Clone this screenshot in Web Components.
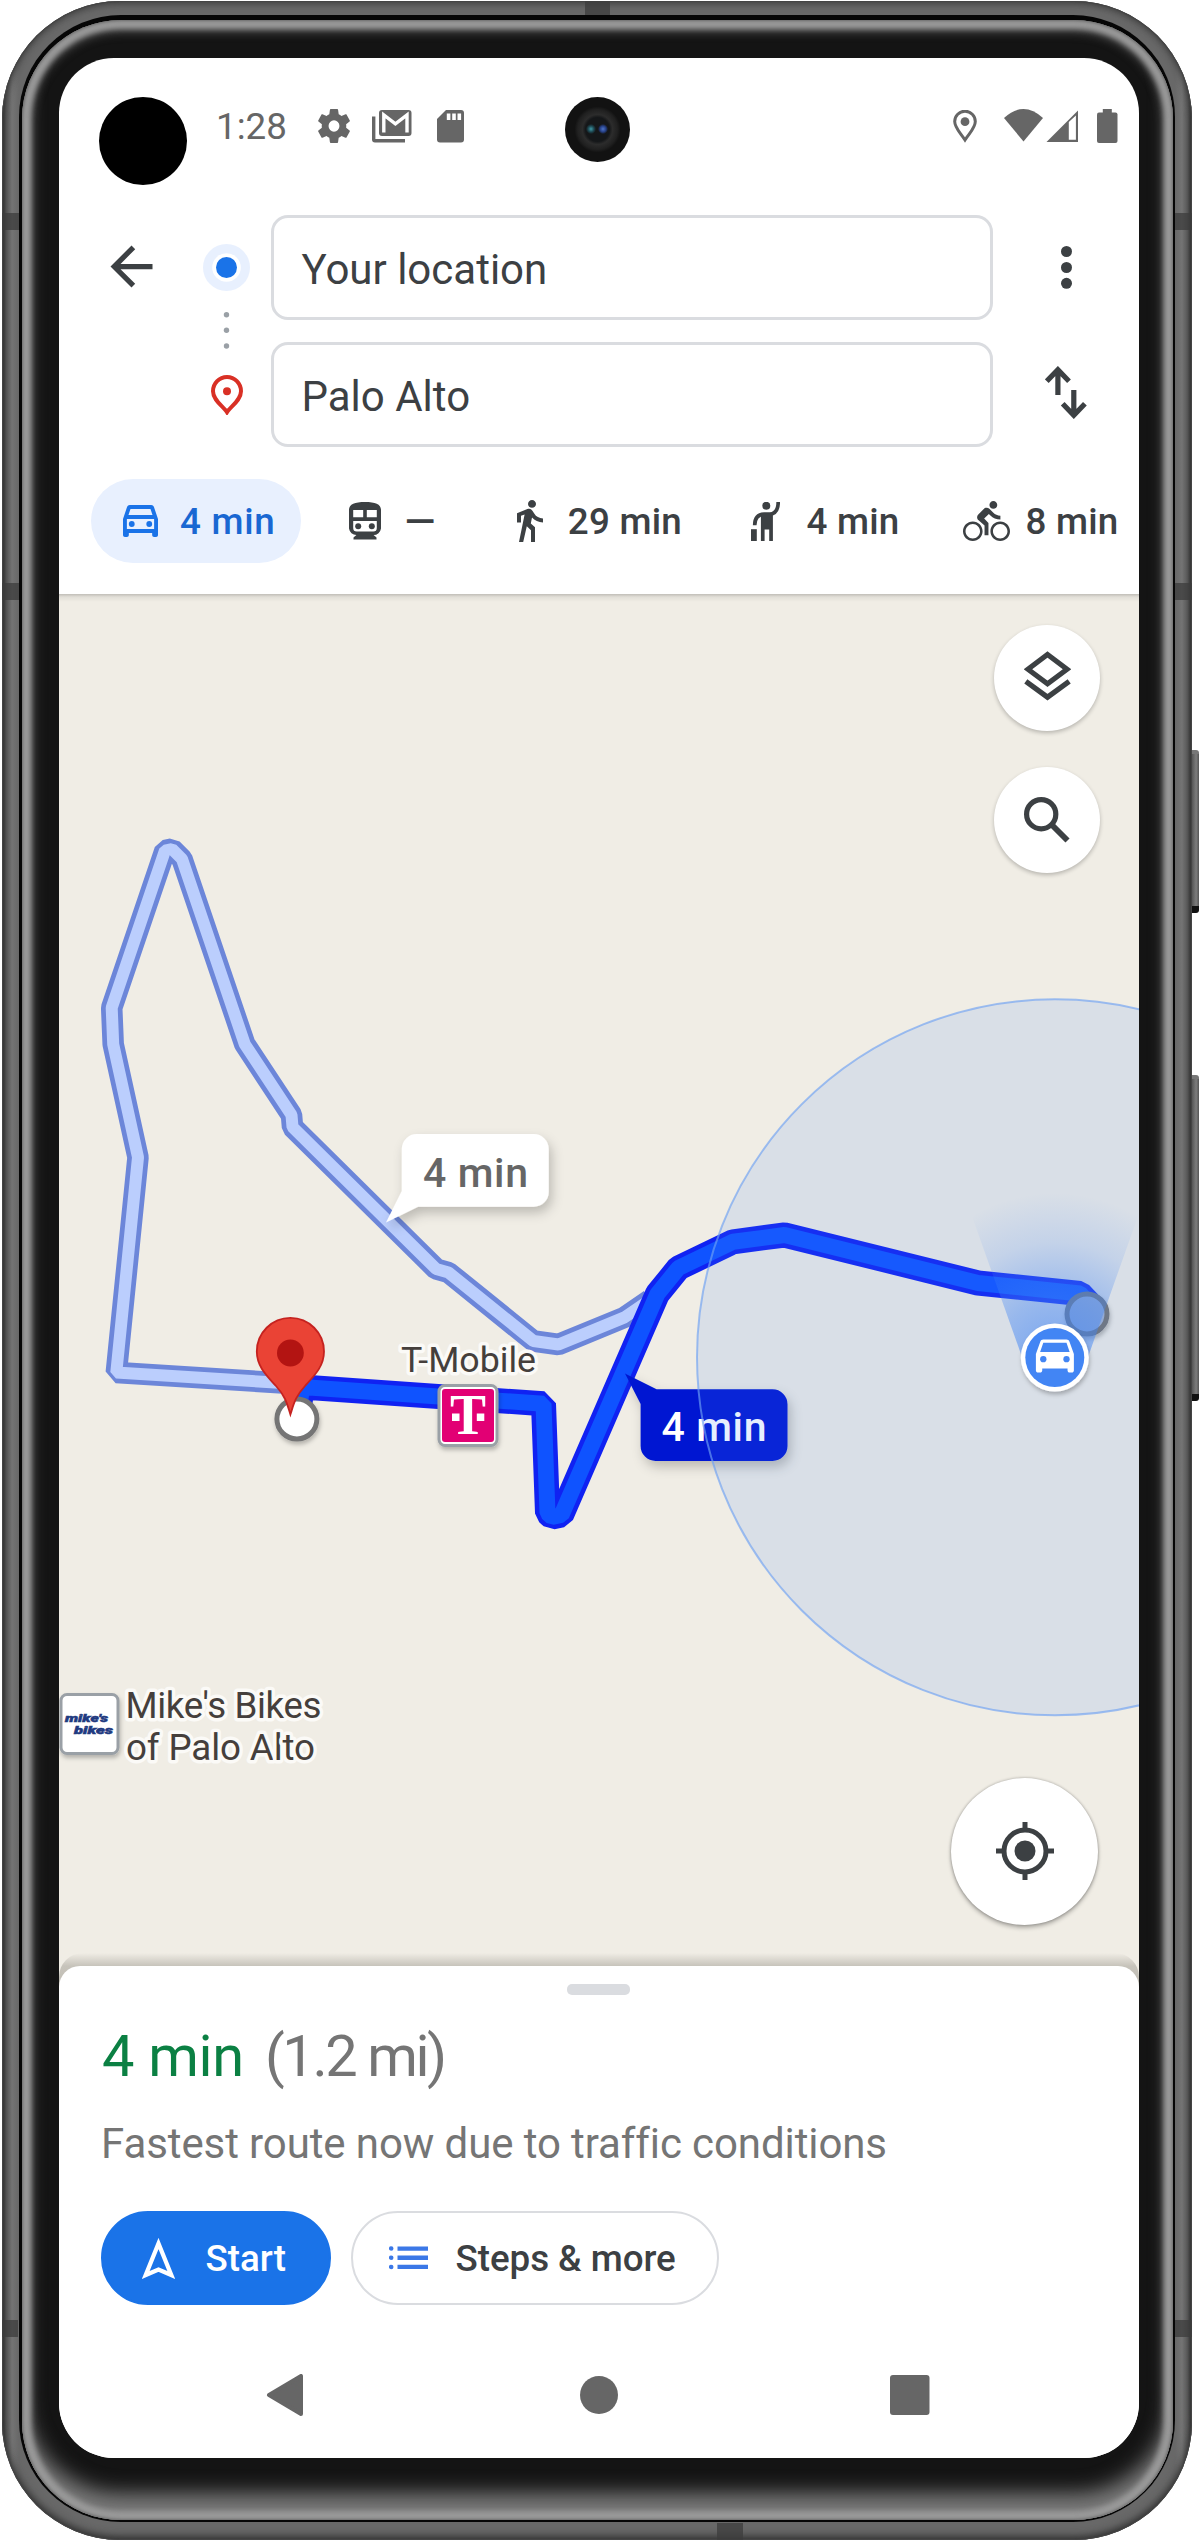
<!DOCTYPE html>
<html lang="en">
<head>
<meta charset="utf-8">
<title>Directions</title>
<style>
html,body{margin:0;padding:0;background:#fff}
body{width:1200px;height:2541px;overflow:hidden;font-family:Roboto,sans-serif;color:#3c4043}
</style>
</head>
<body>
<directions-app></directions-app>
<script>
const CAR='M18.92 6.01C18.72 5.42 18.16 5 17.5 5h-11c-.66 0-1.21.42-1.42 1.01L3 12v8c0 .55.45 1 1 1h1c.55 0 1-.45 1-1v-1h12v1c0 .55.45 1 1 1h1c.55 0 1-.45 1-1v-8l-2.08-5.99z';
// name: [width, height, viewBox, markup]
const ICONS={
gear:[32,34,'2.6 2.4 18.8 19.2','<path d="M19.14 12.94c.04-.3.06-.61.06-.94 0-.32-.02-.64-.07-.94l2.03-1.58c.18-.14.23-.41.12-.61l-1.92-3.32c-.12-.22-.37-.29-.59-.22l-2.39.96c-.5-.38-1.03-.7-1.62-.94l-.36-2.54c-.04-.24-.24-.41-.48-.41h-3.84c-.24 0-.43.17-.47.41l-.36 2.54c-.59.24-1.13.57-1.62.94l-2.39-.96c-.22-.08-.47 0-.59.22L2.74 8.87c-.12.21-.08.47.12.61l2.03 1.58c-.05.3-.09.63-.09.94s.02.64.07.94l-2.03 1.58c-.18.14-.23.41-.12.61l1.92 3.32c.12.22.37.29.59.22l2.39-.96c.5.38 1.03.7 1.62.94l.36 2.54c.05.24.24.41.48.41h3.84c.24 0 .44-.17.47-.41l.36-2.54c.59-.24 1.13-.56 1.62-.94l2.39.96c.22.08.47 0 .59-.22l1.92-3.32c.12-.22.07-.47-.12-.61l-2.01-1.58zM12 15.2a3.2 3.2 0 1 1 0-6.4 3.2 3.2 0 0 1 0 6.4z"/>'],
mail:[39.5,33,'0 0 39.5 33','<path d="M0 6.5h3.4V29H33v3.4H3a3 3 0 0 1-3-3z"/><rect x="7" y="0" width="32.5" height="26" rx="3"/><path d="M11.8 22.5V5l11.6 8.8L35 5v17.500" fill="none" stroke="#fff" stroke-width="3.400"/>'],
sd:[27,33,'0 0 27 33','<path d="M9 0H24a3 3 0 0 1 3 3V29.500a3 3 0 0 1-3 3H3a3 3 0 0 1-3-3V9z"/><path d="M11.600 3.500v6.500M17 3.500v6.500M22.300 3.500v6.500" stroke="#fff" stroke-width="3.600"/>'],
pinSmall:[24,33,'0 0 24 33','<path d="M12 30C8 23.500 1.700 18 1.700 11.500a10.300 10.300 0 0 1 20.600 0C22.300 18 16 23.500 12 30z" fill="none" stroke="currentColor" stroke-width="3"/><circle cx="12" cy="11.700" r="4.400"/>'],
wifi:[39,32.500,'0 0 39 32.500','<path d="M0 9Q19.500-9 39 9L19.500 32.500z"/>'],
signal:[32.500,32.500,'0 0 32.500 32.500','<path d="M0 32.500L32.500 0V32.500zM22.800 12V29.800H29.900V5.500z" fill-rule="evenodd"/>'],
battery:[20.500,34,'0 0 20.500 34','<rect y="3.500" width="20.500" height="30.500" rx="2"/><rect x="5.800" width="9" height="6"/>'],
back:[63,63,'0 0 24 24','<path d="M20 11H7.830l5.590-5.590L12 4l-8 8 8 8 1.410-1.410L7.830 13H20v-2z"/>'],
origin:[47,47,'0 0 47 47','<circle cx="23.500" cy="23.500" r="23.500" fill="#e8f0fe"/><circle cx="23.500" cy="23.500" r="14.300" fill="#fff"/><circle cx="23.500" cy="23.500" r="10.500" fill="#1a73e8"/>'],
steps:[47,37,'0 0 47 37','<g fill="#9aa0a6"><circle cx="23.500" cy="2.800" r="2.700"/><circle cx="23.500" cy="18.300" r="2.700"/><circle cx="23.500" cy="34" r="2.700"/></g>'],
dest:[32,40,'0 0 32 40','<path d="M16 37.200C12.500 31.500 2 25.500 2 16.200a14 14.200 0 0 1 28 0C30 25.500 19.500 31.500 16 37.200z" fill="none" stroke="#d93025" stroke-width="4"/><circle cx="16" cy="16.200" r="4" fill="#d93025"/>'],
more:[11,43,'0 0 11 43','<circle cx="5.500" cy="5.500" r="5.500"/><circle cx="5.500" cy="21.500" r="5.500"/><circle cx="5.500" cy="37.300" r="5.500"/>'],
swap:[42,53,'0 0 42 53','<g fill="none" stroke="currentColor" stroke-width="5.200"><path d="M12.900 29V4M1.800 15.200L12.900 3.700 24 15.200"/><path d="M28.800 24V49M17.700 37.800L28.800 49.300 39.900 37.800"/></g>'],
car:[35,32,'3 5 18 16','<path fill-rule="evenodd" d="'+CAR+'M6.850 7h10.290l1.040 3H5.810l1.040-3zM19 17H5v-5h14v5z"/><circle cx="7.500" cy="14.500" r="1.500"/><circle cx="16.500" cy="14.500" r="1.500"/>'],
train:[32,37.500,'0 0 32 37.500','<path fill-rule="evenodd" d="M0 8C0 2 6 0 16 0s16 2 16 8V26.500A7.500 7.500 0 0 1 24.500 33H7.500A7.500 7.500 0 0 1 0 26.500zM4.200 8v7.200h10V8zM17.800 8v7.200h10V8zM4.200 19v7a3.500 3.500 0 0 0 3.500 3.500H24.300a3.500 3.500 0 0 0 3.500-3.500V19z"/><circle cx="9.200" cy="24.300" r="3"/><circle cx="22.800" cy="24.300" r="3"/><path d="M8 32.500H24l3.500 3V37.500H4.500V35.500z"/>'],
walk:[26,42,'6 1.500 13 21.500','<path d="M13.500 5.500c1.100 0 2-.9 2-2s-.9-2-2-2-2 .9-2 2 .9 2 2 2zM9.800 8.900L7 23h2.100l1.800-8 2.100 2v6h2v-7.500l-2.100-2 .6-3C14.800 12 16.800 13 19 13v-2c-1.900 0-3.500-1-4.300-2.400l-1-1.600c-.4-.6-1-1-1.700-1-.3 0-.5.100-.8.100L6 8.300V13h2V9.600l1.800-.7"/>'],
hail:[30,39,'0 0 30 39','<circle cx="16.300" cy="3.800" r="4"/><path d="M28.200 0C28.200 7 26 11.500 20 12.200H14C8 12.500 4.800 16 4.700 23.200" fill="none" stroke="currentColor" stroke-width="3.700"/><path d="M10.900 11H22.900V39H19.200V27.500H14.600V39H10.900z"/><rect x="1" y="27.200" width="5.800" height="11.800"/>'],
bike:[47,40,'0 1.500 24 20.500','<path d="M15.500 5.500c1.100 0 2-.9 2-2s-.9-2-2-2-2 .9-2 2 .9 2 2 2zM5 12c-2.800 0-5 2.200-5 5s2.200 5 5 5 5-2.200 5-5-2.200-5-5-5zm0 8.700c-2 0-3.700-1.700-3.700-3.700s1.700-3.700 3.700-3.700 3.700 1.700 3.700 3.700-1.700 3.700-3.700 3.700zm5.800-10.200l2.400-2.400.8.8c1.300 1.300 3 2.100 5.100 2.100V9c-1.500 0-2.700-.6-3.600-1.500l-1.900-1.900c-.5-.4-1-.6-1.600-.6s-1.100.2-1.400.6L7.800 8.400c-.4.4-.6.9-.6 1.400 0 .6.2 1.100.6 1.400L11 14v5h2v-6.200l-2.200-2.300zM19 12c-2.800 0-5 2.200-5 5s2.200 5 5 5 5-2.200 5-5-2.200-5-5-5zm0 8.700c-2 0-3.700-1.700-3.700-3.700s1.700-3.700 3.700-3.700 3.700 1.700 3.700 3.700-1.700 3.700-3.700 3.700z"/>'],
layers:[47,50,'0 0 47 50','<path d="M23.500 3.500L43 18.300 23.500 32.800 4 18.300zM1.800 30.300L23.500 46.200 45.200 30.300" fill="none" stroke="currentColor" stroke-width="5.200"/>'],
search:[46,46,'0 0 46 46','<circle cx="17.200" cy="17.200" r="14.600" fill="none" stroke="currentColor" stroke-width="5.200"/><path d="M28.500 28.500L43.500 43.500" stroke="currentColor" stroke-width="5.800"/>'],
locate:[58,58,'0 0 58 58','<circle cx="29" cy="29" r="21" fill="none" stroke="currentColor" stroke-width="5"/><circle cx="29" cy="29" r="10.500"/><path d="M29 0V7M29 51v7M0 29H7M51 29h7" stroke="currentColor" stroke-width="5"/>'],
navigate:[33,41,'0 0 33 41','<path d="M16.500 5.500L29.300 37 16.500 31.600 3.700 37z" fill="none" stroke="currentColor" stroke-width="4.300"/>'],
list:[39,23.500,'0 0 39 23.500','<g fill="#3b78e7"><circle cx="2.200" cy="2.500" r="2.300"/><circle cx="2.200" cy="11.700" r="2.300"/><circle cx="2.200" cy="21" r="2.300"/><path d="M8.500.4H39V4.800H8.500zM8.500 9.500H39V13.900H8.500zM8.500 18.700H39V23.100H8.500z"/></g>'],
navBack:[37,42,'0 0 37 42','<path d="M35 2V40L3 21z" stroke="currentColor" stroke-width="4" stroke-linejoin="round"/>'],
navHome:[38,38,'0 0 38 38','<circle cx="19" cy="19" r="19"/>'],
navRecent:[39.500,40,'0 0 39.500 40','<rect width="39.500" height="40" rx="3"/>']
};

function define(tag,css,html){
  const t=document.createElement('template');
  t.innerHTML='<style>*{box-sizing:border-box}'+css+'</style>'+html;
  customElements.define(tag,class extends HTMLElement{
    constructor(){super();this.attachShadow({mode:'open'}).append(t.content.cloneNode(true));}
  });
}

customElements.define('ui-icon',class extends HTMLElement{
  connectedCallback(){
    const [w,h,vb,body]=ICONS[this.getAttribute('name')];
    if(!this.shadowRoot)this.attachShadow({mode:'open'});
    this.shadowRoot.innerHTML=`<style>:host{display:block;flex:none;width:${w}px;height:${h}px}svg{display:block}</style><svg width="${w}" height="${h}" viewBox="${vb}" preserveAspectRatio="none" fill="currentColor" aria-hidden="true">${body}</svg>`;
  }
});

define('phone-frame',`
:host{display:block;position:relative;width:1200px;height:2541px;padding:1px 8px 1px 2px}
.rim{height:2539px;padding:14px 17px 18px;border-radius:118px;background:linear-gradient(90deg,#2c2c2c 0,#5a5a5a 4px,#747474 10px,#686868 17px,#686868 1173px,#747474 1180px,#5e5e5e 1186px,#2c2c2c 1190px);box-shadow:inset 0 0 0 1px #444,inset 0 -3px 8px #2a2a2a,inset 0 3px 7px #4a4a4a}
.gap{height:100%;padding:5px 2px 2px 3px;border-radius:102px;background:#060606}
.glass{height:100%;padding:38px 34px 62px 37px;border-radius:99px;background:#141414;box-shadow:inset 0 0 3px 1px #6a6a6a,inset 0 0 5px 9px #999,inset 0 -24px 20px 3px #7a7a7a,inset 0 3px 9px 10px #484848}
.screen{height:2400px;border-radius:55px;overflow:hidden;background:#fff}
.band{position:absolute;background:rgba(60,60,60,.75)}
.btn{position:absolute;left:1192px;width:7px;border-radius:0 3px 3px 0;background:linear-gradient(90deg,#555,#7d7d7d 60%,#555);border-top:4px solid #777;border-bottom:7px solid #111}
`,`<div class="rim"><div class="gap"><div class="glass"><div class="screen"><slot></slot></div></div></div></div>
<i class="band" style="left:2px;top:213px;width:17px;height:17px"></i><i class="band" style="left:1175px;top:213px;width:17px;height:17px"></i>
<i class="band" style="left:2px;top:583px;width:17px;height:17px"></i><i class="band" style="left:1175px;top:583px;width:17px;height:17px"></i>
<i class="band" style="left:2px;top:2320px;width:16px;height:17px"></i><i class="band" style="left:1175px;top:2320px;width:17px;height:17px"></i>
<i class="band" style="left:585px;top:1px;width:25px;height:14px"></i><i class="band" style="left:717px;top:2523px;width:26px;height:17px"></i>
<i class="btn" style="top:750px;height:163px"></i><i class="btn" style="top:1075px;height:326px"></i>`);

define('status-bar',`
:host{display:flex;align-items:flex-start;height:157px;padding-top:39px;color:#666}
.hole{width:88px;height:88px;border-radius:50%;background:#000;margin-left:40px;flex:none}
.clock{font-size:36.75px;line-height:44px;width:76px;margin:8px 0 0 29px;flex:none}
ui-icon{margin-top:12.500px}
.cam{width:65px;height:65px;border-radius:50%;flex:none;margin-left:101px;background:radial-gradient(circle at 26px 32px,#3f9aa6 0,#1d4650 3px,transparent 5px),radial-gradient(circle at 38px 32px,#4f75c8 0,#253f85 3px,transparent 5px),radial-gradient(circle at 50% 50%,#151719 0 12px,#2c2c2c 15px,#202020 20px,#121212 23px)}
`,`<span class="hole"></span><span class="clock">1:28</span>
<ui-icon name="gear" style="margin-left:26px;margin-top:12px"></ui-icon><ui-icon name="mail" style="margin-left:22px"></ui-icon><ui-icon name="sd" style="margin-left:25.500px"></ui-icon>
<span class="cam"></span>
<ui-icon name="pinSmall" style="margin-left:322.500px"></ui-icon><ui-icon name="wifi" style="margin-left:27px;margin-top:12px"></ui-icon><ui-icon name="signal" style="margin-left:3px"></ui-icon><ui-icon name="battery" style="margin-left:19px;margin-top:12px"></ui-icon>`);

define('route-field',`
:host{display:flex;align-items:center;height:105px;border:3px solid #dadce0;border-radius:17px;padding:3px 0 0 27.500px;font-size:42px;color:#3c4043}
`,`<slot></slot>`);

define('travel-mode',`
:host{display:flex;align-items:center;flex:none;height:84px;font-size:36.75px;font-weight:500;white-space:nowrap;color:#3c4043;letter-spacing:.25px}
:host([selected]){background:#e8f0fe;border-radius:42px;color:#1967d2;letter-spacing:.7px}
:host([selected]) ::slotted(ui-icon){color:#1a73e8}
`,`<slot name="icon"></slot><slot></slot>`);

define('route-header',`
:host{display:block;height:379px}
.top{display:flex;align-items:flex-start;padding-left:41px;height:232px}
.rail{display:flex;flex-direction:column;align-items:center;width:47px;margin-left:40px;padding-top:29px}
.fields{display:flex;flex-direction:column;gap:22px;width:722px;margin-left:21px}
.actions{display:flex;flex-direction:column;align-items:center;flex:1;gap:77px;padding-top:31px}
.modes{display:flex;margin:32px 0 0 32px}
`,`<div class="top"><ui-icon name="back" style="margin-top:20px"></ui-icon>
<div class="rail"><ui-icon name="origin"></ui-icon><ui-icon name="steps" style="margin-top:21px"></ui-icon><ui-icon name="dest" style="margin-top:26px"></ui-icon></div>
<div class="fields"><route-field>Your location</route-field><route-field>Palo Alto</route-field></div>
<div class="actions"><ui-icon name="more"></ui-icon><ui-icon name="swap"></ui-icon></div></div>
<div class="modes">
<travel-mode selected style="width:210px;padding-left:32px"><ui-icon slot="icon" name="car" style="margin-right:22px"></ui-icon>4 min</travel-mode>
<travel-mode style="width:88px;margin-left:47.600px"><ui-icon slot="icon" name="train" style="margin-right:24px"></ui-icon><span style="font-size:40px">—</span></travel-mode>
<travel-mode style="width:163px;margin-left:80.200px"><ui-icon slot="icon" name="walk" style="margin-right:25px"></ui-icon>29 min</travel-mode>
<travel-mode style="width:150px;margin-left:70.200px"><ui-icon slot="icon" name="hail" style="margin-right:26.500px"></ui-icon>4 min</travel-mode>
<travel-mode style="width:158px;margin-left:63px"><ui-icon slot="icon" name="bike" style="margin-right:15.500px"></ui-icon>8 min</travel-mode>
</div>`);

define('round-button',`
:host{display:flex;align-items:center;justify-content:center;flex:none;width:106px;height:106px;border-radius:50%;background:#fff;color:#3c4043;box-shadow:0 2px 4px rgba(0,0,0,.24)}
:host([large]){width:147px;height:147px;box-shadow:0 0 3px rgba(0,0,0,.3),0 3px 4px rgba(0,0,0,.26)}
`,`<slot></slot>`);

define('route-map',`
:host{display:grid;height:1392px;background:#f0ede5;overflow:hidden}
svg,.controls{grid-area:1/1}
svg{display:block}
.controls{display:flex;flex-direction:column;align-items:flex-end;padding:30.500px 39px 0 0;background:linear-gradient(rgba(0,0,0,.2),rgba(0,0,0,.06) 3px,rgba(0,0,0,0) 8px) no-repeat 0 0/100% 8px}
text{font-family:Roboto,sans-serif}
.poi{font-size:36.75px;fill:#453f3c;stroke:#fbfaf7;stroke-width:7px;stroke-linejoin:round;paint-order:stroke}
.eta{font-size:41px;font-weight:500}
.logo{font:italic 900 10.500px/1 Roboto,sans-serif;fill:#1f3a80;stroke:#1f3a80;stroke-width:.5px}
`,`<svg width="1080" height="1392" viewBox="59 594 1080 1392">
<defs>
<filter id="sh" x="-30%" y="-30%" width="160%" height="180%"><feDropShadow dx="3" dy="6" stdDeviation="6" flood-color="#000" flood-opacity=".22"/></filter>
<filter id="sm" x="-30%" y="-30%" width="160%" height="180%"><feDropShadow dx="1" dy="3" stdDeviation="2" flood-color="#000" flood-opacity=".25"/></filter>
<radialGradient id="beam" gradientUnits="userSpaceOnUse" cx="1054.600" cy="1357" r="164"><stop offset="0" stop-color="#4285f4" stop-opacity=".65"/><stop offset=".35" stop-color="#4285f4" stop-opacity=".43"/><stop offset=".7" stop-color="#4285f4" stop-opacity=".14"/><stop offset="1" stop-color="#4285f4" stop-opacity="0"/></radialGradient>
<path id="alt" d="M291 1383.500L116.300 1372.500 138 1157.300 113.200 1044.200 111.700 1007.800 165 850.500 172 849 182 859 244.800 1044.200 291.500 1115 292.500 1127 436.200 1269 448.500 1272.500 533.400 1341 558.500 1344.500 624.500 1317.400 650 1300"/>
<path id="main" d="M298 1419L302 1387 543.500 1403.800 547.500 1513 552 1517 561.500 1515 657.400 1294 678.500 1268 733 1241.800 784.500 1235 978 1283 1080 1293.500 1089 1303"/>
</defs>
<g fill="none" stroke-linejoin="bevel">
<use href="#alt" stroke="#6c86d9" stroke-width="21.500"/><use href="#alt" stroke="#bbcefd" stroke-width="12"/>
<use href="#main" stroke="#1022f2" stroke-width="25"/><use href="#main" stroke="#0f53ff" stroke-width="16"/>
</g>
<circle cx="1087" cy="1314" r="20" fill="#9fb0d0" stroke="#757575" stroke-width="5" filter="url(#sm)"/>
<circle cx="296.900" cy="1419" r="20" fill="#fff" stroke="#757575" stroke-width="5" filter="url(#sm)"/>
<path d="M290.400 1414.500C287 1404 286 1397 276 1386 266 1375 256.800 1366 256.800 1351.500a33.600 33.600 0 0 1 67.200 0C324 1366 315 1375 305 1386 295 1397 293.800 1404 290.400 1414.500z" fill="#ea4335" stroke="#c5221f" stroke-width="1.800"/>
<circle cx="290.400" cy="1353" r="13.400" fill="#b31412"/>
<text class="poi" x="401" y="1372" textLength="135" lengthAdjust="spacingAndGlyphs" style="font-size:35.500px">T-Mobile</text>
<g filter="url(#sm)"><rect x="439" y="1385.500" width="58" height="60" rx="6" fill="#fff" stroke="#9aa0a6" stroke-width="3"/></g>
<rect x="442" y="1389" width="52" height="53" rx="3" fill="#e20074"/>
<text x="468" y="1434" text-anchor="middle" fill="#fff" style="font:bold 57px 'Liberation Serif',serif" textLength="36" lengthAdjust="spacingAndGlyphs">T</text>
<path d="M452 1413.500h7.500v7.500h-7.500zM476.800 1413.500h7.500v7.500h-7.500z" fill="#fff"/>
<path filter="url(#sh)" d="M417 1134H533.700a15 15 0 0 1 15 15V1191.700a15 15 0 0 1-15 15H418L386 1222.500 401.800 1191V1149a15 15 0 0 1 15-15z" fill="#fff"/>
<text class="eta" x="423" y="1186.500" fill="#666" textLength="105">4 min</text>
<path filter="url(#sh)" d="M656.600 1389.300H772.500a15 15 0 0 1 15 15V1446a15 15 0 0 1-15 15H655.600a15 15 0 0 1-15-15V1404L625 1373.600z" fill="#0519d2"/>
<text class="eta" x="661.500" y="1441" fill="#fff" textLength="105">4 min</text>
<circle cx="1055" cy="1357.300" r="358" fill="#4285f4" fill-opacity=".135" stroke="#6ea2f2" stroke-opacity=".65" stroke-width="2"/>
<path d="M1022 1357L973 1219Q973 1180 1055 1180T1137 1219L1088 1357z" fill="url(#beam)"/>
<g filter="url(#sm)"><circle cx="1054.800" cy="1357.500" r="34" fill="#fff"/></g><circle cx="1054.800" cy="1357.500" r="29.500" fill="#4285f4"/>
<g transform="translate(1035.900 1339.600) scale(2.110 2.060) translate(-3 -5)"><path fill="#fff" fill-rule="evenodd" d="${CAR}M5 11l1.500-4.500h11L19 11H5z"/><circle cx="6.500" cy="14.500" r="1.500" fill="#4285f4"/><circle cx="17.500" cy="14.500" r="1.500" fill="#4285f4"/></g>
<g filter="url(#sm)"><rect x="61" y="1694.500" width="57" height="59" rx="6" fill="#fff" stroke="#9aa0a6" stroke-width="3"/></g>
<text class="logo" x="65" y="1722" textLength="43" lengthAdjust="spacingAndGlyphs">mike's</text><text class="logo" x="74" y="1734" textLength="39" lengthAdjust="spacingAndGlyphs">bikes</text>
<text class="poi" x="125.500" y="1717.700" textLength="196">Mike's Bikes</text>
<text class="poi" x="126" y="1760" textLength="189">of Palo Alto</text>
</svg>
<div class="controls">
<round-button><ui-icon name="layers" style="margin-top:-3px"></ui-icon></round-button>
<round-button style="margin-top:36px"><ui-icon name="search"></ui-icon></round-button>
<round-button large style="margin:905px 2px 0 0"><ui-icon name="locate"></ui-icon></round-button>
</div>`);

define('pill-button',`
:host{display:flex;align-items:center;height:94px;border-radius:47px;border:2.600px solid #dadce0;font-size:36.75px;font-weight:500;color:#3c4043;white-space:nowrap}
:host([primary]){background:#1a73e8;border-color:#1a73e8;color:#fff}
`,`<slot name="icon"></slot><slot></slot>`);

define('route-sheet',`
:host{display:block;position:relative;margin-top:-20px;height:492px;border-radius:21px 21px 0 0;background:#fff}
:host::before{content:"";position:absolute;z-index:-1;left:0;right:0;top:-13px;height:60px;border-radius:24px 24px 0 0;background:linear-gradient(rgba(80,75,65,0),rgba(80,75,65,.26) 13px,rgba(80,75,65,.3) 34px)}
.handle{width:63px;height:11px;border-radius:5px;background:#dadce0;margin:0 0 0 508px}
.pad{padding-top:18px}
.title{display:flex;margin:26px 0 0 43px;font-size:57.750px;line-height:70px;color:#757575;white-space:nowrap}
.title b{font-weight:400;color:#0b8043;width:163px}
.note{margin:28px 0 0 42px;font-size:42px;line-height:50px;color:#757575;white-space:nowrap;letter-spacing:-.1px}
.row{display:flex;gap:20px;margin:42px 0 0 42px}
.nav{display:flex;align-items:center;height:42px;margin:69px 0 0 207px;color:#666}
`,`<div class="pad"><div class="handle"></div>
<div class="title"><b style="letter-spacing:-.3px">4 min</b><span style="letter-spacing:-2.400px">(1.2 mi)</span></div>
<div class="note">Fastest route now due to traffic conditions</div>
<div class="row"><pill-button primary style="width:230px;padding-left:38.500px"><ui-icon slot="icon" name="navigate" style="margin-right:31px"></ui-icon>Start</pill-button>
<pill-button style="width:368px;padding-left:35.500px;letter-spacing:-.05px"><ui-icon slot="icon" name="list" style="margin-right:28px"></ui-icon>Steps &amp; more</pill-button></div>
<div class="nav"><ui-icon name="navBack"></ui-icon><ui-icon name="navHome" style="margin-left:277px"></ui-icon><ui-icon name="navRecent" style="margin-left:272.400px"></ui-icon></div></div>`);

define('directions-app',`
:host{display:block}
.view{position:relative;z-index:0}
route-map{position:relative;z-index:-2}
`,`<phone-frame><div class="view"><status-bar></status-bar><route-header></route-header><route-map></route-map><route-sheet></route-sheet></div></phone-frame>`);
</script>
</body>
</html>
